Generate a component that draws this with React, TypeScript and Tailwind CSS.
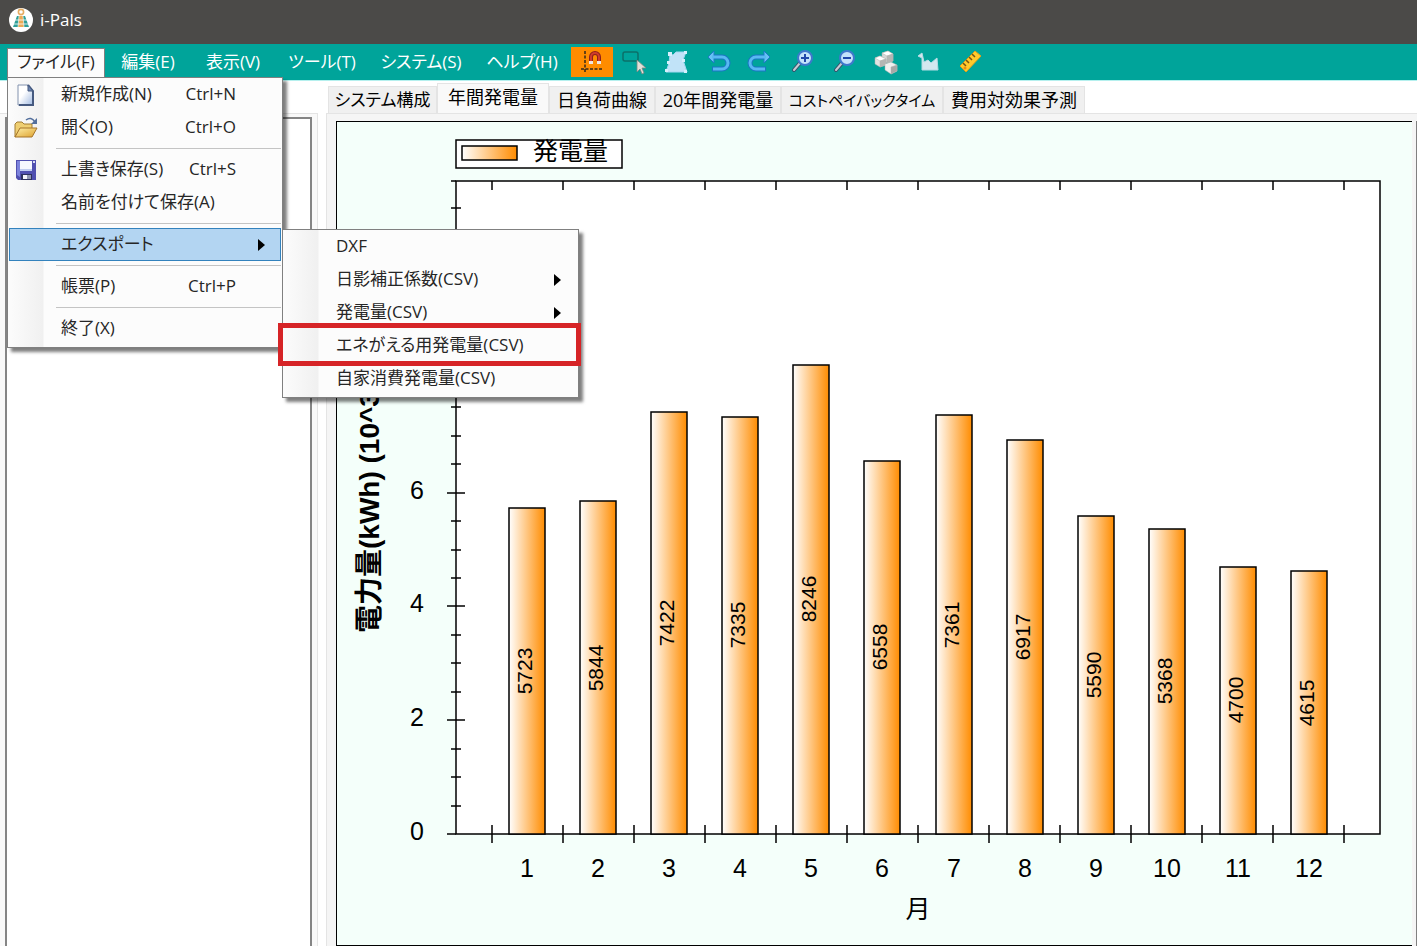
import { useState } from "react";
import type { ReactNode } from "react";
import clsx from "clsx";

const menus = [
  { label: "編集(E)", width: "w-[82px]" },
  { label: "表示(V)", width: "w-[88px]" },
  { label: "ツール(T)", width: "w-[90px]" },
  { label: "システム(S)", width: "w-[108px]" },
  { label: "ヘルプ(H)", width: "w-[94px]" },
];

const tabs = [
  { label: "システム構成", size: "w-[109px] text-[17px]" },
  { label: "年間発電量", size: "w-[112px] text-[18px]" },
  { label: "日負荷曲線", size: "w-[106px] text-[18px]" },
  { label: "20年間発電量", size: "w-[126px] text-[18px]" },
  { label: "コストペイバックタイム", size: "w-[162px] text-[15px]" },
  { label: "費用対効果予測", size: "w-[142px] text-[18px]" },
];

const production = [
  5723, 5844, 7422, 7335, 8246, 6558, 7361, 6917, 5590, 5368, 4700, 4615,
];

function NewIcon() {
  return (
    <svg width="22" height="24" viewBox="0 0 22 24">
      <defs>
        <linearGradient id="page" x1="0" y1="0" x2="1" y2="1">
          <stop offset="0.4" stopColor="#fff" />
          <stop offset="1" stopColor="#9fb8e0" />
        </linearGradient>
      </defs>
      <path d="M3 2h10l5 6v14H3z" fill="url(#page)" stroke="#8292ae" />
      <path d="M13 2l5 6v14H4" fill="none" stroke="#45597f" strokeWidth="2" />
      <path d="M13 2v6h5z" fill="#6d86b2" stroke="#45597f" />
    </svg>
  );
}

function OpenIcon() {
  return (
    <svg width="26" height="24" viewBox="0 0 26 24">
      <defs>
        <linearGradient id="folder" x1="0" y1="0" x2="1" y2="1">
          <stop offset="0" stopColor="#fff0a8" />
          <stop offset="1" stopColor="#dda02c" />
        </linearGradient>
      </defs>
      <path d="M2 21V8l2-2h5l2 2h8v5H7z" fill="#efcf72" stroke="#a37d33" />
      <path d="M2 21l5-9h17l-5 9z" fill="url(#folder)" stroke="#a6752a" />
      <path d="M13 4q5-4 9 2" fill="none" stroke="#526e9c" strokeWidth="1.5" />
      <path d="M24 2v6h-6z" fill="#526e9c" />
    </svg>
  );
}

function SaveIcon() {
  return (
    <svg width="22" height="22" viewBox="0 0 22 22">
      <path d="M1 1h20v20H3l-2-2z" fill="#5050b0" />
      <path d="M2 2h3v16l-3-2z" fill="#7c83dc" />
      <path d="M5 2h12v10H5z" fill="#f6f8ff" />
      <path d="M5 10h12v2H5z" fill="#c1cdf0" />
      <path d="M6 15h11v6H6z" fill="#2c305e" />
      <path d="M8 16h4v4H8z" fill="#f4f4fa" />
      <path d="M12 16h4v4h-4z" fill="#9096b2" />
      <path d="M18 2h2v2h-2z" fill="#d9dcf5" />
    </svg>
  );
}

function AppLogo() {
  return (
    <svg width="26" height="26" viewBox="0 0 26 26">
      <circle cx="13" cy="13" r="12" fill="#fff" />
      <circle cx="13" cy="5" r="2.6" fill="none" stroke="#e6ac62" strokeWidth="1.6" />
      <path d="M9 9h8l4 11H5z" fill="#2f9f98" />
      <path d="M11 9h4l1 11h-6z" fill="#ecaa55" />
      <path d="M7 13h12M5 17h16" stroke="#fff" strokeWidth="0.8" />
      <path d="M11 9l-1 11M15 9l1 11" stroke="#fff" strokeWidth="0.6" />
    </svg>
  );
}

function Magnifier({ plus }: { plus?: boolean }) {
  return (
    <svg width="26" height="26" viewBox="0 0 26 26">
      <path d="M11 14l-6 7" stroke="#37506b" strokeWidth="4" strokeLinecap="round" />
      <path d="M11 14l-6 7" stroke="#c4cbd2" strokeWidth="2" strokeLinecap="round" />
      <circle cx="16" cy="9" r="7" fill="#c3e2fb" stroke="#3f78cc" strokeWidth="2" />
      <path d="M12 9h8" stroke="#2148aa" strokeWidth="2" />
      {plus && <path d="M16 5v8" stroke="#2148aa" strokeWidth="2" />}
    </svg>
  );
}

const tools: { name: string; icon: ReactNode }[] = [
  {
    name: "スナップ",
    icon: (
      <svg width="26" height="26" viewBox="0 0 26 26">
        <path d="M6 2v22M2 20h22" stroke="#33281b" strokeWidth="1.5" strokeDasharray="3 1.5" />
        <path d="M12 15V8a4 4 0 0 1 8 0v7" fill="none" stroke="#8e1f1b" strokeWidth="4" />
        <path d="M12 12V8a4 4 0 0 1 8 0v4" fill="none" stroke="#cf3c2d" strokeWidth="2" />
        <path d="M10 12h4v3h-4zM18 12h4v3h-4z" fill="#eee6e2" />
      </svg>
    ),
  },
  {
    name: "選択",
    icon: (
      <svg width="26" height="26" viewBox="0 0 26 26">
        <rect x="2" y="3" width="15" height="9" rx="2" fill="none" stroke="#0b7069" strokeWidth="1.5" />
        <path d="M16 11v12l3-3 2 5 2-1-2-5h4z" fill="#e3e0d8" stroke="#7a8580" strokeWidth="0.8" />
      </svg>
    ),
  },
  {
    name: "領域",
    icon: (
      <svg width="26" height="26" viewBox="0 0 26 26">
        <path d="M7 5l3 1 3-3h10l-3 8 4 12H3l3-9z" fill="#c1e3f8" stroke="#a3d8f1" />
        <path d="M5 3h4v4H5zM21 2h3v3h-3zM21 21h3v3h-3zM2 20h3v3H2zM19 10h3v3h-3zM4 12h3v3H4z" fill="#d6effc" />
      </svg>
    ),
  },
  {
    name: "元に戻す",
    icon: (
      <svg width="26" height="26" viewBox="0 0 26 26" fill="none">
        <path d="M6 8h11a5 5 0 0 1 0 12H7" stroke="#1b75c4" strokeWidth="5" />
        <path d="M9 2L3 8l6 6z" fill="#68c1f4" stroke="#1d7bc8" />
        <path d="M7 8h10a5 5 0 0 1 0 12H8" stroke="#58b9f2" strokeWidth="3" />
      </svg>
    ),
  },
  {
    name: "やり直し",
    icon: (
      <svg width="26" height="26" viewBox="0 0 26 26" fill="none">
        <path d="M20 8H9a5 5 0 0 0 0 12h10" stroke="#1b75c4" strokeWidth="5" />
        <path d="M17 2l6 6-6 6z" fill="#68c1f4" stroke="#1d7bc8" />
        <path d="M19 8H9a5 5 0 0 0 0 12h9" stroke="#58b9f2" strokeWidth="3" />
      </svg>
    ),
  },
  { name: "拡大", icon: <Magnifier plus /> },
  { name: "縮小", icon: <Magnifier /> },
  {
    name: "3D表示",
    icon: (
      <svg width="26" height="26" viewBox="0 0 26 26" strokeWidth="0.5" stroke="#b0b2b0">
        <path d="M9 4l6-2 5 3v7l-6 2-5-3z" fill="#d6d7d6" />
        <path d="M9 4l6-2 5 3-6 2z" fill="#fff" />
        <path d="M14 7v7l6-2V5z" fill="#b4b6b4" />
        <path d="M2 9l5-2 6 3v6l-6 2-5-3z" fill="#e2e3e2" />
        <path d="M2 9l5-2 6 3-6 2z" fill="#fff" />
        <path d="M7 12v6l6-2v-6z" fill="#b4b6b4" />
        <path d="M12 15l6-2 6 3v6l-6 3-6-4z" fill="#f0f0ef" />
        <path d="M18 18l6-2v6l-6 3z" fill="#a6a8a6" />
      </svg>
    ),
  },
  {
    name: "面の描画",
    icon: (
      <svg width="26" height="26" viewBox="0 0 26 26">
        <path d="M3 7l4-3 2 9 4-2 3 3 6-5 1 12H7V9z" fill="#d3e8ef" stroke="#b5dbe4" />
      </svg>
    ),
  },
  {
    name: "計測",
    icon: (
      <svg width="26" height="26" viewBox="0 0 26 26">
        <path d="M3 17L18 2l6 5L9 23z" fill="#ffca2b" stroke="#e0a01a" strokeLinejoin="round" />
        <path d="M6 14l3 3M9 11l3 3M12 8l3 3M15 5l3 3" stroke="#765314" strokeWidth="1.5" />
        <circle cx="8" cy="19" r="1.5" fill="#e78e17" />
      </svg>
    ),
  },
];

interface MenuRowProps {
  label: string;
  shortcut?: string;
  icon?: ReactNode;
  arrow?: boolean;
  active?: boolean;
  children?: ReactNode;
}

function MenuRow({ label, shortcut, icon, arrow, active, children }: MenuRowProps) {
  return (
    <li className="relative">
      <button
        className={clsx(
          "flex h-[33px] w-full items-center border text-left",
          active ? "border-[#3382bd] bg-[#b3d5f2]" : "border-transparent"
        )}
      >
        <span className="flex w-8 shrink-0 justify-center">{icon}</span>
        <span className="flex-1 pb-0.5 pl-[19px] whitespace-nowrap">{label}</span>
        {shortcut && <span className="pr-11 pb-0.5">{shortcut}</span>}
        {arrow && (
          <svg className="mr-3.5" width="9" height="14" viewBox="0 0 9 14">
            <path d="M1 1l7 6-7 6z" fill="#000" />
          </svg>
        )}
      </button>
      {children}
    </li>
  );
}

function Separator() {
  return (
    <li role="separator" className="flex h-[9px] items-center pl-[47px]">
      <div className="h-px w-full bg-[#c4c4c4]" />
    </li>
  );
}

const panelStyle =
  "absolute border border-[#808080] bg-[linear-gradient(to_right,#fcfcfc,#f0f0f0_35px,#fcfcfc_36px)] px-px pb-0.5 text-[#262626] shadow-[4px_4px_3px_rgba(0,0,0,0.5)]";

function ExportMenu() {
  return (
    <ul className={clsx(panelStyle, "top-px left-[273px] z-20 w-[297px]")}>
      <MenuRow label="DXF" />
      <MenuRow label="日影補正係数(CSV)" arrow />
      <MenuRow label="発電量(CSV)" arrow />
      <MenuRow label="エネがえる用発電量(CSV)">
        <div className="pointer-events-none absolute -top-1.5 -right-1 -bottom-1 -left-1.5 border-[5px] border-[#d62427]" />
      </MenuRow>
      <MenuRow label="自家消費発電量(CSV)" />
    </ul>
  );
}

function FileMenu() {
  return (
    <ul className={clsx(panelStyle, "top-full left-0 z-10 w-[276px]")}>
      <MenuRow label="新規作成(N)" shortcut="Ctrl+N" icon={<NewIcon />} />
      <MenuRow label="開く(O)" shortcut="Ctrl+O" icon={<OpenIcon />} />
      <Separator />
      <MenuRow label="上書き保存(S)" shortcut="Ctrl+S" icon={<SaveIcon />} />
      <MenuRow label="名前を付けて保存(A)" />
      <Separator />
      <MenuRow label="エクスポート" arrow active>
        <ExportMenu />
      </MenuRow>
      <Separator />
      <MenuRow label="帳票(P)" shortcut="Ctrl+P" />
      <Separator />
      <MenuRow label="終了(X)" />
    </ul>
  );
}

// Plot area inside the chart's drawing surface
const plot = { left: 119, right: 1043, top: 59, bottom: 712 };
const step = (plot.right - plot.left) / 13;
const unit = 56.9;

function YearChart() {
  const monthTicks = Array.from({ length: 13 }, (_, i) => Math.round(plot.left + step * (i + 0.5)));
  const valueTicks = Array.from({ length: 23 }, (_, i) => i / 2);

  return (
    <svg
      viewBox="0 0 1075 823"
      className="block h-auto w-full font-['Liberation_Sans','Noto_Sans_CJK_JP',sans-serif]"
      role="img"
      aria-label="年間発電量"
    >
      <defs>
        <linearGradient id="bar">
          <stop offset="0" stopColor="#fff" />
          <stop offset="1" stopColor="#ff8c00" />
        </linearGradient>
      </defs>

      <g stroke="#000" strokeWidth="1.5">
        <rect x="119" y="18" width="166" height="28" fill="#fff" />
        <rect x="125" y="24" width="55" height="14" fill="url(#bar)" />
        <rect
          x={plot.left}
          y={plot.top}
          width={plot.right - plot.left}
          height={plot.bottom - plot.top}
          fill="#fff"
        />
        <path d={`M${plot.left - 5} ${plot.top}h5M${plot.left - 9} ${plot.bottom}h9`} />
        {monthTicks.map((x) => (
          <path key={x} d={`M${x} ${plot.top}v9M${x} ${plot.bottom - 9}v18`} />
        ))}
        {valueTicks.map((v) => {
          const size = v % 2 === 0 && v < 11 ? 9 : 5;
          const y = Math.round(plot.bottom - v * unit);
          return v > 0 && <path key={v} d={`M${plot.left - size} ${y}h${size * 2}`} />;
        })}
        {production.map((value, i) => {
          const h = Math.round((value / 1000) * unit);
          const x = Math.round(plot.left + step * (i + 1) - 18);
          return (
            <rect key={i} x={x} y={plot.bottom - h} width="36" height={h} fill="url(#bar)" />
          );
        })}
      </g>

      <text x="196" y="38" fontSize="25">
        発電量
      </text>
      <g fontSize="25" textAnchor="middle">
        {[0, 2, 4, 6].map((v) => (
          <text key={v} x="80" y={Math.round(plot.bottom - v * unit) + 6}>
            {v}
          </text>
        ))}
        {production.map((_, i) => (
          <text key={i} x={Math.round(plot.left + step * (i + 1))} y="755">
            {i + 1}
          </text>
        ))}
        <text x="581" y="796">
          月
        </text>
      </g>
      <g fontSize="21" textAnchor="middle">
        {production.map((value, i) => {
          const x = Math.round(plot.left + step * (i + 1)) + 5;
          const y = Math.round(plot.bottom - (value / 2000) * unit);
          return (
            <text key={i} transform={`translate(${x} ${y}) rotate(-90)`}>
              {value}
            </text>
          );
        })}
      </g>
      <text fontSize="28" fontWeight="bold" transform="translate(42 511) rotate(-90)">
        電力量(kWh) (10^3)
      </text>
    </svg>
  );
}

export default function App() {
  const [activeTab, setActiveTab] = useState(1);

  return (
    <div className="flex min-h-screen flex-col bg-white font-['Open_Sans','Noto_Sans_CJK_JP',sans-serif] text-[17px] leading-6">
      <header className="flex h-11 items-center gap-1.5 bg-[#4b4a48] px-2 pb-1 text-white">
        <AppLogo />
        <h1>i-Pals</h1>
      </header>

      <nav className="flex h-9 items-end bg-[#00a49a] pl-[7px] text-white [font-feature-settings:'palt']">
        <div className="relative mb-[3px]">
          <button className="h-[29px] w-[98px] border border-b-0 border-[#808080] bg-[#fcfcfc] pb-0.5 text-[#262626]">
            ファイル(F)
          </button>
          <FileMenu />
        </div>
        <div className="mb-[3px] flex pl-0.5">
          {menus.map((menu) => (
            <button key={menu.label} className={clsx("h-[29px] pb-0.5 whitespace-nowrap", menu.width)}>
              {menu.label}
            </button>
          ))}
        </div>
        <div className="mb-[3px] flex pl-0.5">
          {tools.map((tool, i) => (
            <button
              key={tool.name}
              aria-label={tool.name}
              className={clsx(
                "flex h-[30px] w-[42px] items-center justify-center",
                i === 0 && "bg-[#ff8c00]"
              )}
            >
              {tool.icon}
            </button>
          ))}
        </div>
      </nav>

      <main className="flex flex-1 border-t border-[#b5f0ee]">
        <aside className="mt-8 flex w-[318px] shrink-0 border-t border-r border-[#e4e4e4] bg-[#f9f9f9] pt-[3px] pr-[5px] pl-[5px]">
          <div className="flex-1 border-2 border-b-0 border-[#858585] bg-white" />
        </aside>

        <section className="ml-2 flex min-w-0 flex-1 flex-col">
          <div role="tablist" className="flex h-8 items-end pl-0.5 [font-feature-settings:'palt']">
            {tabs.map((tab, i) => (
              <button
                key={tab.label}
                role="tab"
                aria-selected={i === activeTab}
                onClick={() => setActiveTab(i)}
                className={clsx(
                  "border border-b-0 border-[#e4e4e4] whitespace-nowrap text-black",
                  tab.size,
                  i === activeTab ? "h-[30px] bg-[#f9f9f9] pb-1" : "h-[27px] bg-[#f0f0f0]"
                )}
              >
                {tab.label}
              </button>
            ))}
          </div>
          <div className="flex-1 border-t border-l border-[#e4e4e4] bg-[#f5f5f5] pt-[7px] pl-[9px]">
            <div className="border-r border-[#808080] pr-1">
              <div className="border border-r-0 border-black bg-[#f4fffa]">
                <YearChart />
              </div>
            </div>
          </div>
        </section>
      </main>
    </div>
  );
}
